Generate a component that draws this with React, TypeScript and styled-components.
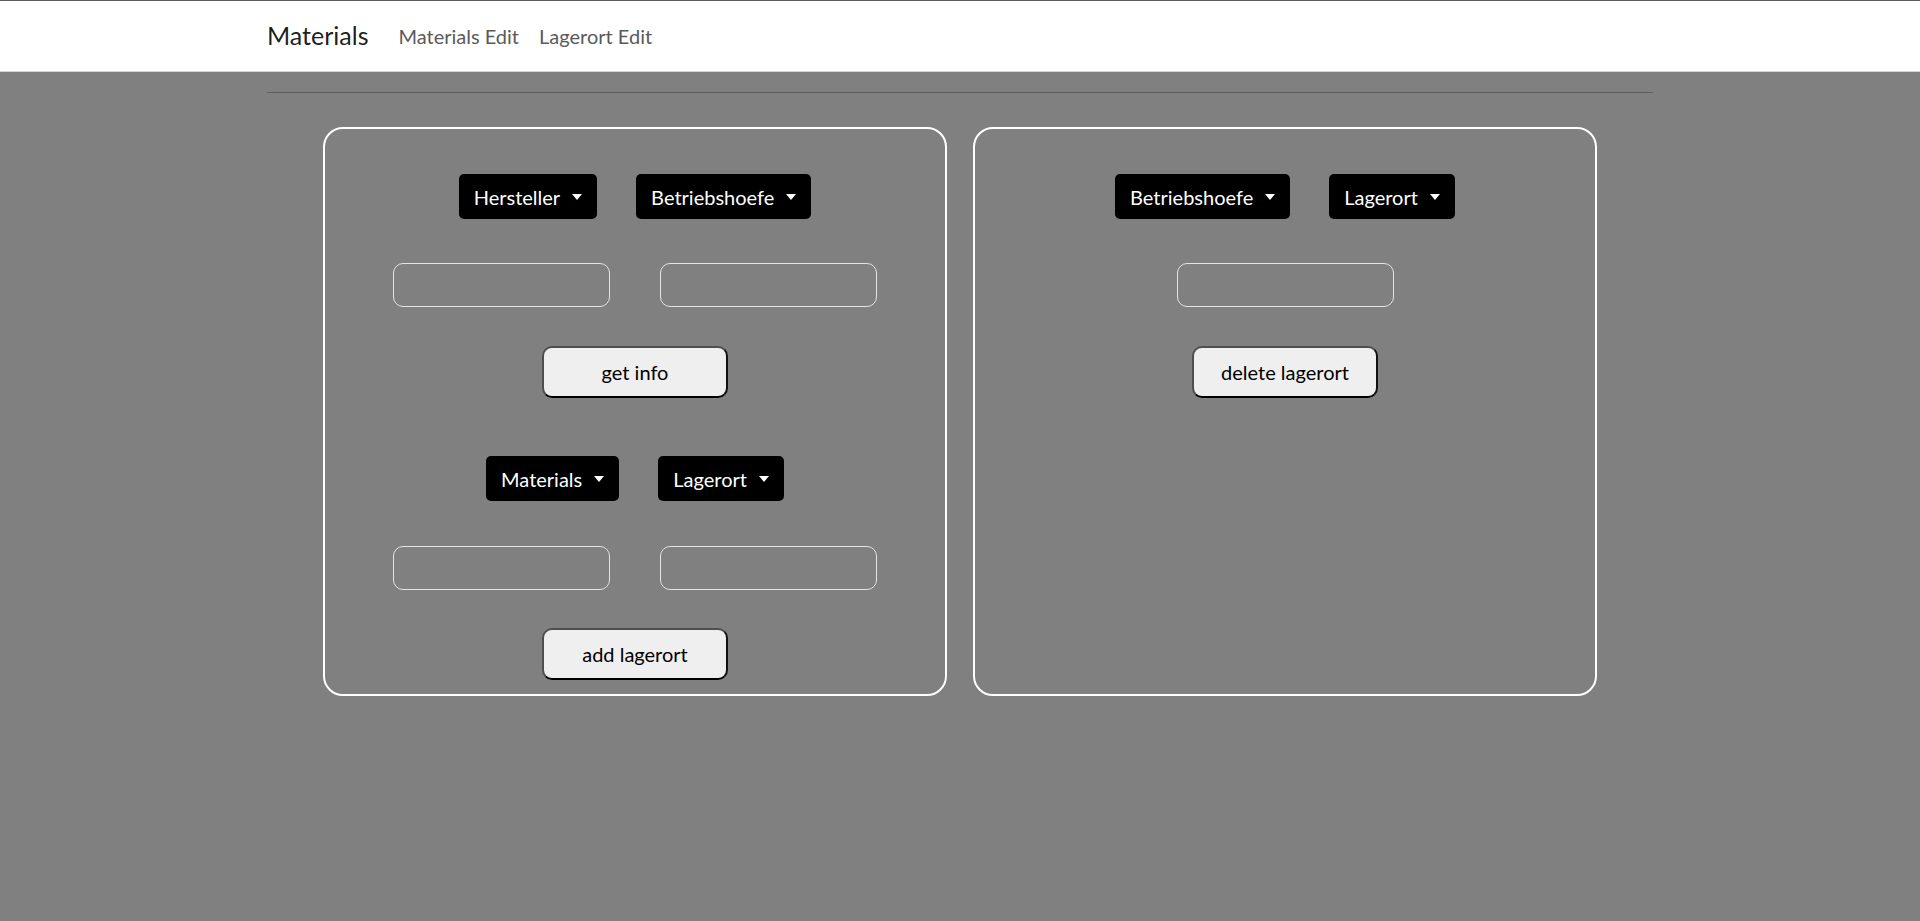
import styled, { createGlobalStyle } from "styled-components";

const GlobalStyle = createGlobalStyle`
    html, body {
        margin: 0;
        padding: 0;
        background-color: #808080;
        font-family: Lato, "Liberation Sans", sans-serif;
    }
    * {
        box-sizing: border-box;
    }
`;

const NavBar = styled.nav`
    height: 72px;
    background-color: #ffffff;
    border-top: 1px solid #5c5c5c;
    border-bottom: 1px solid #d4d4d4;
`;
const Container = styled.div`
    width: 1386px;
    margin: 0 auto;
`;
const NavInner = styled(Container)`
    display: flex;
    align-items: center;
    height: 100%;
`;
const Brand = styled.a`
    font-size: 25px;
    color: rgba(0, 0, 0, 0.9);
    margin-right: 20px;
    text-decoration: none;
    line-height: 1;
    padding-bottom: 2px;
`;
const NavLink = styled.a`
    font-size: 20px;
    color: #5a5a5a;
    padding: 0 10px;
    text-decoration: none;
    line-height: 1;
`;
const Divider = styled.hr`
    margin: 20px 0 0;
    border: 0;
    border-top: 1px solid #5f5f5f;
    height: 1px;
    background: #6c6c6c;
`;
const CardRow = styled.div`
    display: flex;
    justify-content: center;
    gap: 26px;
    margin-top: 34px;
`;
const Card = styled.div`
    width: 624px;
    border: 2px solid #ffffff;
    border-radius: 20px;
    padding: 45px 0 14px;
    display: flex;
    flex-direction: column;
    align-items: center;
`;
const DropRow = styled.div<{ $top?: number }>`
    display: flex;
    gap: 39px;
    margin-top: ${(p) => p.$top ?? 0}px;
`;
const Dropdown = styled.button`
    height: 45px;
    padding: 0 15px;
    background-color: #000000;
    color: #ffffff;
    border: 0;
    border-radius: 5px;
    font-family: inherit;
    font-size: 20px;
    display: flex;
    align-items: center;
    white-space: nowrap;
    &::after {
        content: "";
        display: inline-block;
        margin-left: 12px;
        border-top: 6px solid #ffffff;
        border-left: 5px solid transparent;
        border-right: 5px solid transparent;
    }
`;
const InputRow = styled.div<{ $top: number }>`
    display: flex;
    gap: 50px;
    margin-top: ${(p) => p.$top}px;
`;
const TextInput = styled.input`
    width: 217px;
    height: 44px;
    background: transparent;
    border: 1px solid #e4e4e4;
    border-radius: 10px;
    outline: none;
`;
const ActionButton = styled.button<{ $top: number }>`
    width: 186px;
    height: 52px;
    margin-top: ${(p) => p.$top}px;
    background-color: #efefef;
    border: 2px solid;
    border-color: #4e4e4e #111111 #000000 #4e4e4e;
    border-radius: 10px;
    font-family: inherit;
    font-size: 20px;
    color: #000000;
`;

export default function App() {
    return (
        <>
            <GlobalStyle />
            <NavBar>
                <NavInner>
                    <Brand href="#">Materials</Brand>
                    <NavLink href="#">Materials Edit</NavLink>
                    <NavLink href="#">Lagerort Edit</NavLink>
                </NavInner>
            </NavBar>
            <Container>
                <Divider />
            </Container>
            <CardRow>
                <Card>
                    <DropRow>
                        <Dropdown>Hersteller</Dropdown>
                        <Dropdown>Betriebshoefe</Dropdown>
                    </DropRow>
                    <InputRow $top={44}>
                        <TextInput />
                        <TextInput />
                    </InputRow>
                    <ActionButton $top={39}>get info</ActionButton>
                    <DropRow $top={58}>
                        <Dropdown>Materials</Dropdown>
                        <Dropdown>Lagerort</Dropdown>
                    </DropRow>
                    <InputRow $top={45}>
                        <TextInput />
                        <TextInput />
                    </InputRow>
                    <ActionButton $top={38}>add lagerort</ActionButton>
                </Card>
                <Card>
                    <DropRow>
                        <Dropdown>Betriebshoefe</Dropdown>
                        <Dropdown>Lagerort</Dropdown>
                    </DropRow>
                    <InputRow $top={44}>
                        <TextInput />
                    </InputRow>
                    <ActionButton $top={39}>delete lagerort</ActionButton>
                </Card>
            </CardRow>
        </>
    );
}
